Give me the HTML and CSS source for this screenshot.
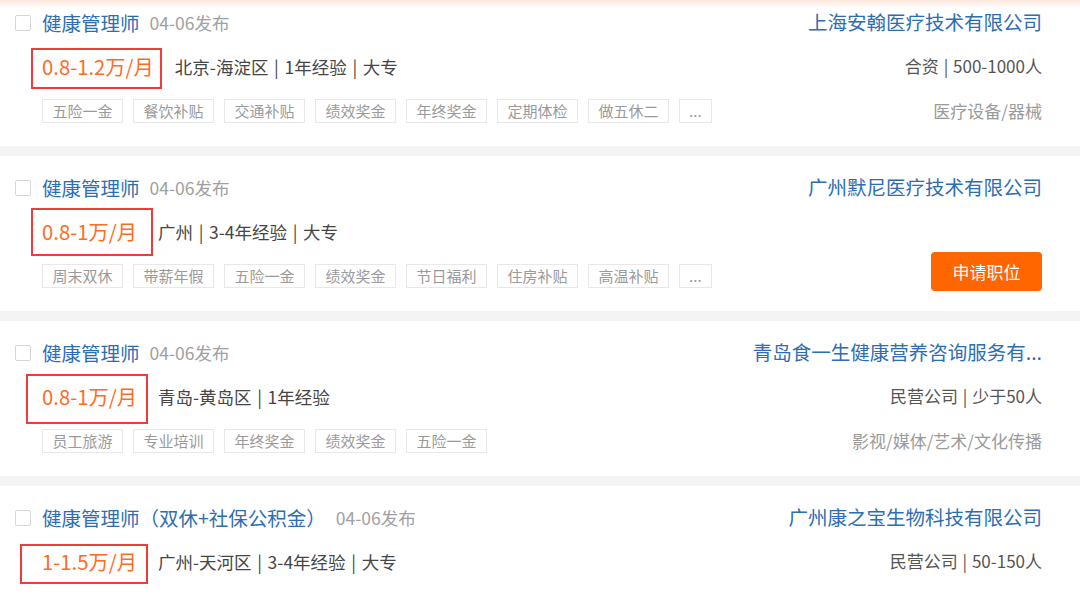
FILE: index.html
```html
<!DOCTYPE html>
<html lang="zh-CN">
<head>
    <meta charset="utf-8">
    <title>职位列表</title>
    <link rel="stylesheet" href="styles.css">
</head>
<body>
<div class="top-shade"></div>
<ul class="job-list">
    <li class="job">
        <div class="job-main">
            <div class="title-row"><span class="check"></span><a class="job-name">健康管理师</a><span class="pub-date">04-06发布</span></div>
            <div class="meta-row"><span class="salary">0.8-1.2万/月</span><span class="req">北京-海淀区 | 1年经验 | 大专</span></div>
            <ul class="tags">
                <li>五险一金</li><li>餐饮补贴</li><li>交通补贴</li><li>绩效奖金</li><li>年终奖金</li><li>定期体检</li><li>做五休二</li><li class="more">...</li>
            </ul>
        </div>
        <div class="job-side">
            <a class="company">上海安翰医疗技术有限公司</a>
            <div class="company-info">合资 | 500-1000人</div>
            <div class="industry">医疗设备/器械</div>
        </div>
        <span class="mark mark-1"></span>
    </li>
    <li class="job">
        <div class="job-main">
            <div class="title-row"><span class="check"></span><a class="job-name">健康管理师</a><span class="pub-date">04-06发布</span></div>
            <div class="meta-row"><span class="salary">0.8-1万/月</span><span class="req">广州 | 3-4年经验 | 大专</span></div>
            <ul class="tags">
                <li>周末双休</li><li>带薪年假</li><li>五险一金</li><li>绩效奖金</li><li>节日福利</li><li>住房补贴</li><li>高温补贴</li><li class="more">...</li>
            </ul>
        </div>
        <div class="job-side">
            <a class="company">广州默尼医疗技术有限公司</a>
            <button class="apply">申请职位</button>
        </div>
        <span class="mark mark-2"></span>
    </li>
    <li class="job">
        <div class="job-main">
            <div class="title-row"><span class="check"></span><a class="job-name">健康管理师</a><span class="pub-date">04-06发布</span></div>
            <div class="meta-row"><span class="salary">0.8-1万/月</span><span class="req">青岛-黄岛区 | 1年经验</span></div>
            <ul class="tags">
                <li>员工旅游</li><li>专业培训</li><li>年终奖金</li><li>绩效奖金</li><li>五险一金</li>
            </ul>
        </div>
        <div class="job-side">
            <a class="company" title="青岛食一生健康营养咨询服务有限公司">青岛食一生健康营养咨询服务有...</a>
            <div class="company-info">民营公司 | 少于50人</div>
            <div class="industry">影视/媒体/艺术/文化传播</div>
        </div>
        <span class="mark mark-3"></span>
    </li>
    <li class="job job-last">
        <div class="job-main">
            <div class="title-row"><span class="check"></span><a class="job-name">健康管理师（双休+社保公积金）</a><span class="pub-date">04-06发布</span></div>
            <div class="meta-row"><span class="salary">1-1.5万/月</span><span class="req">广州-天河区 | 3-4年经验 | 大专</span></div>
        </div>
        <div class="job-side">
            <a class="company">广州康之宝生物科技有限公司</a>
            <div class="company-info">民营公司 | 50-150人</div>
        </div>
        <span class="mark mark-4"></span>
    </li>
</ul>
</body>
</html>
```

FILE: styles.css
```css
*{margin: 0;padding: 0;box-sizing: border-box;}
html,body{height: 596px;overflow: hidden;}
body{background: #f4f4f4;font-family: "Noto Sans CJK SC", "Noto Sans", sans-serif;color: #444;}
ul{list-style: none;}
a{text-decoration: none;cursor: pointer;}

.top-shade{position: fixed;top: 0;left: 0;right: 0;height: 8px;background: linear-gradient(#fbe6dc, rgba(255,255,255,0));z-index: 2;}

.job-list{margin-top: -9px;}
.job{position: relative;display: flex;justify-content: space-between;height: 155px;margin-bottom: 10px;padding: 16px 38px 0 15px;background: #fff;}
.job-last{height: 120px;margin-bottom: 0;}

.title-row{display: flex;align-items: center;height: 30px;}
.check{width: 16px;height: 16px;border: 1px solid #d6d6d6;border-radius: 2px;margin-right: 11px;margin-top: 2px;}
.job-name{font-size: 19.5px;color: #2d6db3;margin-right: 10px;white-space: nowrap;}
.pub-date{font-size: 17.5px;color: #a0a0a0;}

.meta-row{display: flex;align-items: center;height: 30px;margin-top: 14px;padding-left: 27px;}
.salary{font-size: 20.3px;color: #ff6b1f;margin-right: 21px;white-space: nowrap;}
.req{font-size: 17.5px;word-spacing: 1.75px;color: #454545;white-space: nowrap;}

.tags{display: flex;gap: 10px;margin-top: 18px;padding-left: 27px;}
.tags li{height: 24px;line-height: 22px;padding: 0 9.5px;border: 1px solid #e8e8e8;font-size: 15px;color: #9a9a9a;white-space: nowrap;}
.tags .more{padding: 0 9px;}

.job-side{display: flex;flex-direction: column;align-items: flex-end;}
.company{height: 30px;line-height: 30px;font-size: 19.5px;color: #2d6db3;white-space: nowrap;}
.company-info{height: 30px;line-height: 30px;margin-top: 14px;font-size: 17px;word-spacing: 1px;color: #555;white-space: nowrap;}
.industry{height: 24px;line-height: 24px;margin-top: 18px;font-size: 17px;color: #9a9a9a;white-space: nowrap;}
.apply{width: 111px;height: 39px;margin-top: 50px;border: none;border-radius: 4px;background: #ff6600;color: #fff;font-family: inherit;font-size: 17px;cursor: pointer;}

/* red annotation boxes drawn over the salary */
.mark{position: absolute;border: 2px solid #f23a3a;}
.mark-1{left: 31px;top: 57px;width: 131px;height: 41px;}
.mark-2{left: 31px;top: 52px;width: 122px;height: 48px;}
.mark-3{left: 26px;top: 53px;width: 122px;height: 50px;}
.mark-4{left: 20px;top: 58px;width: 128px;height: 40px;}
```
